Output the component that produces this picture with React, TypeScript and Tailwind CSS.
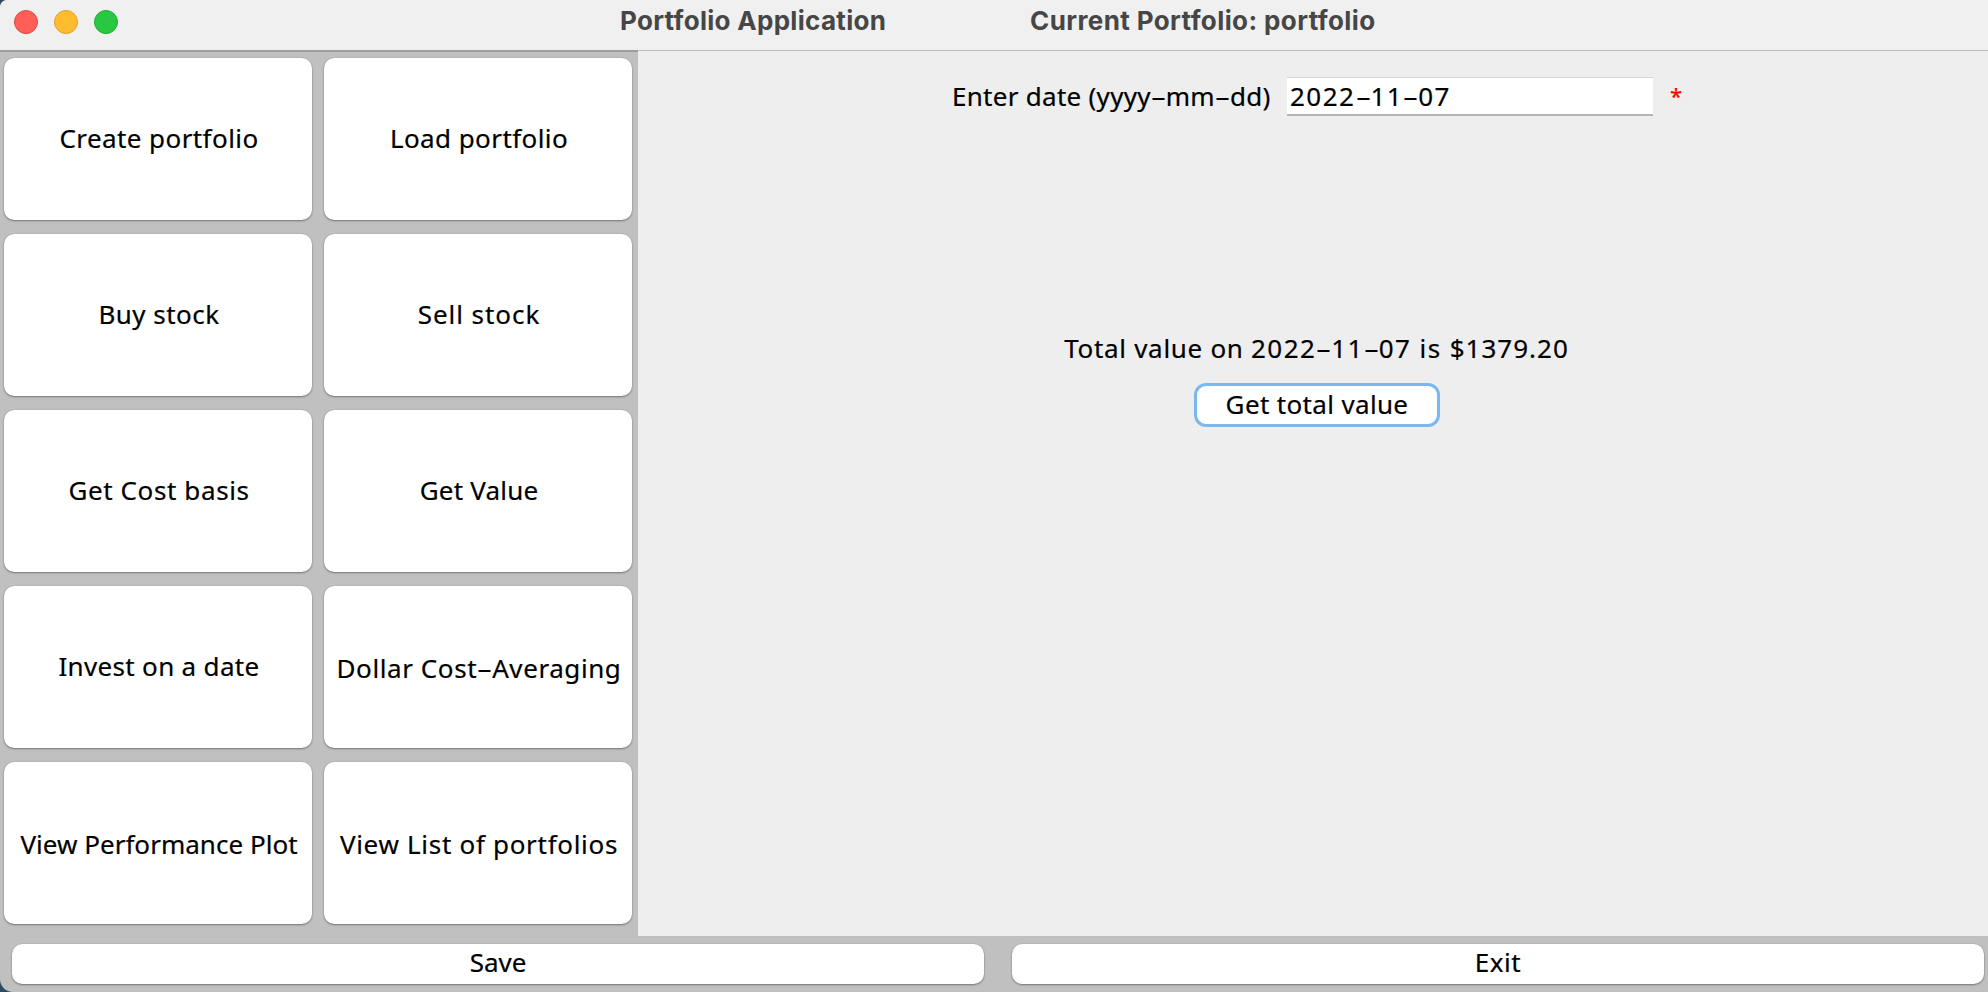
import { Fragment } from "react";

type Item = { label: string; cls: string };

const actions: Item[] = [
  { label: "Create portfolio", cls: "tracking-[0.42px] pb-0.5" },
  { label: "Load portfolio", cls: "tracking-[0.42px] pb-0.5" },
  { label: "Buy stock", cls: "tracking-[0.45px] pb-0.5" },
  { label: "Sell stock", cls: "tracking-[0.95px] pb-0.5" },
  { label: "Get Cost basis", cls: "tracking-[0.6px] pb-0.5" },
  { label: "Get Value", cls: "tracking-[0.2px] pb-0.5" },
  { label: "Invest on a date", cls: "tracking-[0.33px] pb-0.5" },
  { label: "Dollar Cost-Averaging", cls: "tracking-[0.58px] pt-0.5" },
  { label: "View Performance Plot", cls: "tracking-[0.03px] pt-0.5" },
  { label: "View List of portfolios", cls: "tracking-[0.7px] pt-0.5" },
];

/* Hyphens are drawn wide, like a minus sign. */
function Wide({ text }: { text: string }) {
  return (
    <span className="whitespace-pre">
      {text.split("-").map((part, i) => (
        <Fragment key={i}>
          {i > 0 && (
            <span className="inline-block w-[15px] scale-x-[1.85] text-center tracking-normal">-</span>
          )}
          {part}
        </Fragment>
      ))}
    </span>
  );
}

const raised = "bg-white shadow-[0_1px_2px_rgba(0,0,0,0.38),0_0_1px_rgba(0,0,0,0.3)]";

export default function App() {
  return (
    <div className="h-[992px] w-[1988px] overflow-hidden bg-[#2b4c60] font-['Noto_Sans',sans-serif] text-[26px] leading-9 text-black [-webkit-text-stroke:0.2px]">
      <div className="flex h-full flex-col overflow-hidden rounded-tl-[7px] rounded-bl-[13px] bg-[#c0c0c0]">
        <header className="flex h-[50px] shrink-0 items-start bg-[#f0f0f0] pl-[14px]">
          <div className="flex gap-4 pt-[10px]">
            <span className="size-6 rounded-full border border-[#e2463f] bg-[#ff5f57]" />
            <span className="size-6 rounded-full border border-[#e0a028] bg-[#febc2e]" />
            <span className="size-6 rounded-full border border-[#1dad2b] bg-[#28c840]" />
          </div>
          <h1 className="ml-[502px] flex pt-[3px] font-['Inter',sans-serif] text-[26px] font-bold whitespace-pre text-[#464646] [-webkit-text-stroke:0px]">
            <span className="w-[410px] tracking-[0.3px]">Portfolio Application</span>
            <span className="tracking-[0.4px]">Current Portfolio: portfolio</span>
          </h1>
        </header>
        <div className="flex h-[886px] shrink-0">
          <nav className="grid w-[638px] grid-cols-[308px_308px] grid-rows-[repeat(5,162px)] gap-x-3 gap-y-[14px] border-t-2 border-[#9d9d9d] pt-[6px] pl-1">
            {actions.map((a) => (
              <button key={a.label} className={`flex items-center justify-center rounded-[10px] pl-0.5 ${raised} ${a.cls}`}>
                <Wide text={a.label} />
              </button>
            ))}
          </nav>
          <main className="flex flex-1 flex-col items-center border-t border-[#bdbdbd] bg-[#eeeeee]">
            <div className="mt-[26px] flex h-[39px] w-full items-center pl-[314px]">
              <label className="w-[335px] pb-0.5 tracking-[0.28px]">
                <Wide text="Enter date (yyyy-mm-dd)" />
              </label>
              <div className="flex h-[39px] w-[366px] items-center border-t border-b-2 border-t-[#d6d6d6] border-b-[#b4b4b4] bg-white pb-px pl-[3px] tracking-[1.5px]">
                <Wide text="2022-11-07" />
              </div>
              <span className="ml-[17px] pb-1 text-[22px] text-[#ff0000]">*</span>
            </div>
            <p className="mt-[214px] ml-[7px] whitespace-pre">
              <span className="tracking-[0.7px]">Total value on </span>
              <span className="tracking-[1.42px]">
                <Wide text="2022-11-07" />
              </span>
              <span className="tracking-[1.4px]"> is </span>
              <span className="tracking-[1px]">$1379.20</span>
            </p>
            <button className="mt-[17px] ml-[7px] flex h-[44px] w-[246px] items-center justify-center rounded-[12px] border-3 border-[#7ab8f0] bg-white pb-0.5 pl-px tracking-[0.35px]">
              Get total value
            </button>
          </main>
        </div>
        <footer className="flex gap-7 pt-2 pl-3">
          <button className={`h-10 w-[972px] rounded-[10px] pb-1 ${raised}`}>Save</button>
          <button className={`h-10 w-[972px] rounded-[10px] pb-1 tracking-[0.6px] ${raised}`}>Exit</button>
        </footer>
      </div>
    </div>
  );
}
